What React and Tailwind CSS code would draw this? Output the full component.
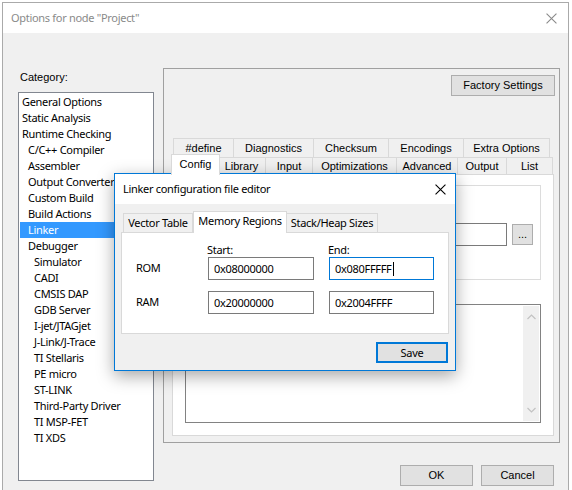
import React from 'react';

const ms = "font-['Liberation_Sans',Arial,sans-serif] text-[11px] leading-[13px]";
const seg = "font-['Noto_Sans',sans-serif] text-[11px] leading-[14px] tracking-[-0.3px]";

const categories = [
  ['General Options', 0],
  ['Static Analysis', 0],
  ['Runtime Checking', 0],
  ['C/C++ Compiler', 1],
  ['Assembler', 1],
  ['Output Converter', 1],
  ['Custom Build', 1],
  ['Build Actions', 1],
  ['Linker', 1],
  ['Debugger', 1],
  ['Simulator', 2],
  ['CADI', 2],
  ['CMSIS DAP', 2],
  ['GDB Server', 2],
  ['I-jet/JTAGjet', 2],
  ['J-Link/J-Trace', 2],
  ['TI Stellaris', 2],
  ['PE micro', 2],
  ['ST-LINK', 2],
  ['Third-Party Driver', 2],
  ['TI MSP-FET', 2],
  ['TI XDS', 2],
];

const backTabs = [
  ['#define', 61],
  ['Diagnostics', 80],
  ['Checksum', 75],
  ['Encodings', 75],
  ['Extra Options', 86],
];

const frontTabs = [
  ['Config', 45],
  ['Library', 48],
  ['Input', 47],
  ['Optimizations', 84],
  ['Advanced', 61],
  ['Output', 49],
  ['List', 46],
];

function CloseX({ color, size }) {
  return (
    <svg width={size} height={size} viewBox="0 0 10 10">
      <path d="M0.5 0.5 L9.5 9.5 M9.5 0.5 L0.5 9.5" stroke={color} strokeWidth="1" fill="none" />
    </svg>
  );
}

function WinButton({ children, className = '' }) {
  return (
    <div className={`flex items-center justify-center bg-[#e1e1e1] border border-[#adadad] text-black ${className}`}>
      {children}
    </div>
  );
}

function Chevron({ up }) {
  return (
    <svg width="9" height="6" viewBox="0 0 9 6">
      <path d={up ? 'M0.5 5 L4.5 1 L8.5 5' : 'M0.5 1 L4.5 5 L8.5 1'} stroke="#c2c2c2" strokeWidth="1.2" fill="none" />
    </svg>
  );
}

function LinkerDialog() {
  return (
    <div className="absolute left-[114px] top-[173px] w-[342px] border border-[#0078d7] bg-[#f0f0f0] shadow-[0_5px_16px_rgba(0,0,0,0.35)] flex flex-col">
      {/* title bar */}
      <div className="h-[30px] bg-white flex items-center justify-between pl-[8px] pr-[9px]">
        <span className={`${seg} text-black`}>Linker configuration file editor</span>
        <CloseX color="#000" size={11} />
      </div>

      <div className="flex flex-col px-[6px] pt-[7px] pb-[7px]">
        {/* tabs */}
        <div className={`flex items-end h-[21px] pl-[2px] ${seg}`}>
          <div className="h-[19px] w-[70px] border border-b-0 border-[#d9d9d9] bg-[#f0f0f0] flex items-center justify-center text-black">
            Vector Table
          </div>
          <div className="h-[22px] w-[94px] border border-b-0 border-[#d9d9d9] bg-white flex items-start justify-center pt-[2px] -mb-px relative z-10 text-black">
            Memory Regions
          </div>
          <div className="h-[19px] w-[91px] border border-b-0 border-l-0 border-[#d9d9d9] bg-[#f0f0f0] flex items-center justify-center text-black">
            Stack/Heap Sizes
          </div>
        </div>

        {/* page */}
        <div className={`h-[102px] border border-[#d9d9d9] bg-white pl-[14px] pt-[10px] ${seg} text-black`}>
          <div className="grid grid-cols-[57px_106px_105px] gap-x-[15px]">
            <div className="h-[14px]" />
            <div className="h-[14px] -ml-px">Start:</div>
            <div className="h-[14px] -ml-px">End:</div>

            <div className="h-[23px] flex items-center pb-[2px]">ROM</div>
            <div className="h-[23px] border border-[#7a7a7a] flex items-center pl-[5px]">0x08000000</div>
            <div className="h-[23px] border border-[#0078d7] flex items-center pl-[5px]">
              0x080FFFFF
              <span className="w-px h-[14px] bg-black ml-px" />
            </div>

            <div className="h-[23px] mt-[11px] flex items-center pb-[2px]">RAM</div>
            <div className="h-[23px] mt-[11px] border border-[#7a7a7a] flex items-center pl-[5px]">0x20000000</div>
            <div className="h-[23px] mt-[11px] border border-[#7a7a7a] flex items-center pl-[5px]">0x2004FFFF</div>
          </div>
        </div>

        <div className="flex justify-end mt-[8px] mr-[1px]">
          <div className={`w-[72px] h-[21px] bg-[#e1e1e1] border-2 border-[#0078d7] flex items-center justify-center ${seg} text-black`}>
            Save
          </div>
        </div>
      </div>
    </div>
  );
}

export default function App() {
  return (
    <div className="relative w-[572px] h-[490px] bg-white overflow-hidden">
      <div className="ml-[2px] mt-[2px] w-[567px] h-[500px] border border-[#aaaaaa] flex flex-col">
        {/* title bar */}
        <div className="h-[30px] bg-white flex items-center justify-between pl-[8px] pr-[11px]">
          <span className={`${seg} text-[#8a8a8a]`}>Options for node "Project"</span>
          <CloseX color="#8a8a8a" size={11} />
        </div>

        {/* body */}
        <div className="flex-1 bg-[#f0f0f0] flex pl-[15px]">
          {/* category column */}
          <div className="w-[136px] flex flex-col pt-[38px]">
            <div className={`${ms} h-[14px] pl-[2px] text-black`}>Category:</div>
            <div className="mt-[7px] h-[389px] border border-[#828790] bg-white p-px">
              {categories.map(([name, level]) => {
                const sel = name === 'Linker';
                const pad = level === 0 ? 'pl-[2px]' : level === 1 ? 'pl-[8px]' : 'pl-[14px]';
                return (
                  <div
                    key={name}
                    className={`h-[16px] flex items-center ${pad} ${seg} whitespace-nowrap ${sel ? 'bg-[#3399ff] text-white' : 'text-black'}`}
                  >
                    {name}
                  </div>
                );
              })}
            </div>
          </div>

          {/* right column */}
          <div className="ml-[9px] w-[397px] flex flex-col pt-[35px]">
            <div className="h-[375px] border border-[#a0a0a0] flex flex-col">
              <div className="flex justify-end pt-[6px] pr-[4px]">
                <WinButton className={`w-[104px] h-[21px] ${ms}`}>Factory Settings</WinButton>
              </div>

              {/* tab rows */}
              <div className={`mt-[42px] flex pl-[9px] ${ms}`}>
                {backTabs.map(([t, w], i) => (
                  <div
                    key={t}
                    style={{ width: w }}
                    className={`h-[19px] border-t border-r border-[#d9d9d9] ${i === 0 ? 'border-l' : ''} bg-[#f0f0f0] flex items-center justify-center text-black`}
                  >
                    {t}
                  </div>
                ))}
              </div>
              <div className={`flex pl-[9px] h-[17px] items-end ${ms}`}>
                {frontTabs.map(([t, w], i) =>
                  i === 0 ? (
                    <div
                      key={t}
                      className="w-[49px] h-[21px] -ml-[2px] -mr-[2px] -mb-px relative z-10 border border-b-0 border-[#d9d9d9] bg-white flex items-start justify-center pt-[3px] text-black"
                    >
                      {t}
                    </div>
                  ) : (
                    <div
                      key={t}
                      style={{ width: w }}
                      className="h-[17px] border-t border-r border-[#d9d9d9] bg-[#f0f0f0] flex items-center justify-center text-black"
                    >
                      {t}
                    </div>
                  )
                )}
              </div>

              {/* tab page */}
              <div className="ml-[8px] mr-[5px] h-[262px] border border-[#d9d9d9] bg-white flex flex-col px-[12px] pt-[10px]">
                <div className="h-[95px] ml-[-4px] border border-[#dcdcdc] flex items-center justify-end pr-[7px] pt-[3px]">
                  <div className="w-[300px] h-[23px] border border-[#7a7a7a] bg-white" />
                  <WinButton className={`ml-[5px] w-[21px] h-[21px] ${ms}`}>...</WinButton>
                </div>
                <div className="mt-[24px] h-[119px] border border-[#828282] bg-white flex justify-end p-px">
                  <div className="w-[16px] h-full bg-[#f0f0f0] flex flex-col items-center justify-between py-[8px]">
                    <Chevron up />
                    <Chevron />
                  </div>
                </div>
              </div>
            </div>

            {/* OK / Cancel */}
            <div className={`mt-[22px] flex justify-end gap-[8px] pr-[6px] ${ms}`}>
              <WinButton className="w-[73px] h-[21px]">OK</WinButton>
              <WinButton className="w-[73px] h-[21px]">Cancel</WinButton>
            </div>
          </div>
        </div>
      </div>

      <LinkerDialog />
    </div>
  );
}
